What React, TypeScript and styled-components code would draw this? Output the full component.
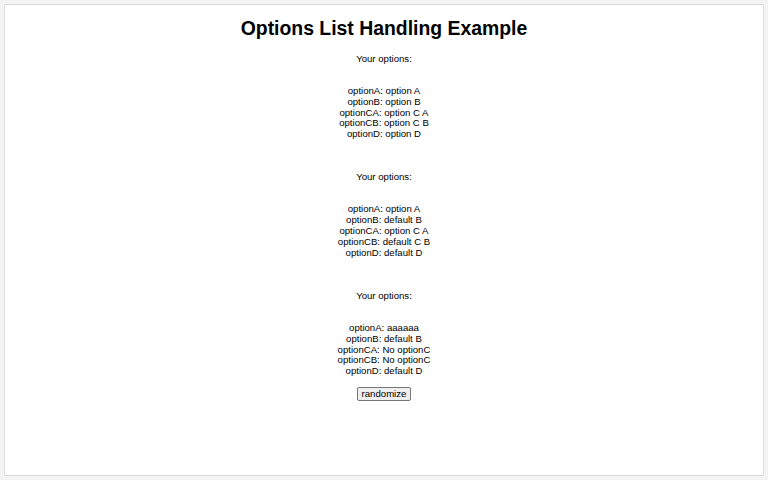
import React, { useState } from "react";
import styled, { createGlobalStyle } from "styled-components";

/* Global */
const GlobalStyle = createGlobalStyle`
	html, body {
		margin: 0;
		padding: 0;
		background: #f4f4f4;
		font-family: "Liberation Sans", Arial, sans-serif;
		color: #000;
	}
`;

/* Styles */
const Card = styled.div`
	margin: 4px 4px 0 4px;
	height: 472px;
	box-sizing: border-box;
	background: #fff;
	border: 1px solid #dcdcdc;
	padding-top: 12px;
	display: flex;
	flex-direction: column;
	align-items: center;
`;

const Title = styled.h1`
	margin: 0;
	font-size: 19.4px;
	line-height: 22px;
	font-weight: bold;
`;

const OptionsBlock = styled.div<{ first: boolean }>`
	display: flex;
	flex-direction: column;
	align-items: center;
	margin-top: ${({ first }) => (first ? "14.6px" : "32.2px")};
`;

const Caption = styled.div`
	font-size: 9.6px;
	line-height: 10.75px;
	margin-bottom: 21.6px;
`;

const OptionLine = styled.div`
	font-size: 9.6px;
	line-height: 10.8px;
	text-align: center;
	white-space: pre;
`;

const RandomizeButton = styled.button`
	margin-top: 10px;
	font-family: "Liberation Sans", Arial, sans-serif;
	font-size: 9.6px;
	line-height: 10px;
	padding: 1px 4px;
	color: #000;
	background: #efefef;
	border: 1px solid #767676;
	border-radius: 2px;
	cursor: pointer;
`;

interface OptionSet {
	optionA: string;
	optionB: string;
	optionCA: string;
	optionCB: string;
	optionD: string;
}

const initialSets: OptionSet[] = [
	{ optionA: "option A", optionB: "option B", optionCA: "option C A", optionCB: "option C B", optionD: "option D" },
	{ optionA: "option A", optionB: "default B", optionCA: "option C A", optionCB: "default C B", optionD: "default D" },
	{ optionA: "aaaaaa", optionB: "default B", optionCA: "No optionC", optionCB: "No optionC", optionD: "default D" },
];

function OptionsList({ options, first }: { options: OptionSet; first: boolean }) {
	return (
		<OptionsBlock first={first}>
			<Caption>Your options:</Caption>
			{Object.entries(options).map(([key, value]) => (
				<OptionLine key={key}>{`${key}: ${value}`}</OptionLine>
			))}
		</OptionsBlock>
	);
}

export default function App() {
	const [sets, setSets] = useState<OptionSet[]>(initialSets);

	function randomize() {
		const letters = "abcdefghij";
		const word = Array.from({ length: 6 }, () => letters[Math.floor(Math.random() * letters.length)]).join("");
		setSets((prev) => prev.map((set, index) => (index === 2 ? { ...set, optionA: word } : set)));
	}

	return (
		<React.Fragment>
			<GlobalStyle />
			<Card>
				<Title>Options List Handling Example</Title>
				{sets.map((set, index) => (
					<OptionsList key={index} options={set} first={index === 0} />
				))}
				<RandomizeButton onClick={randomize}>randomize</RandomizeButton>
			</Card>
		</React.Fragment>
	);
}
